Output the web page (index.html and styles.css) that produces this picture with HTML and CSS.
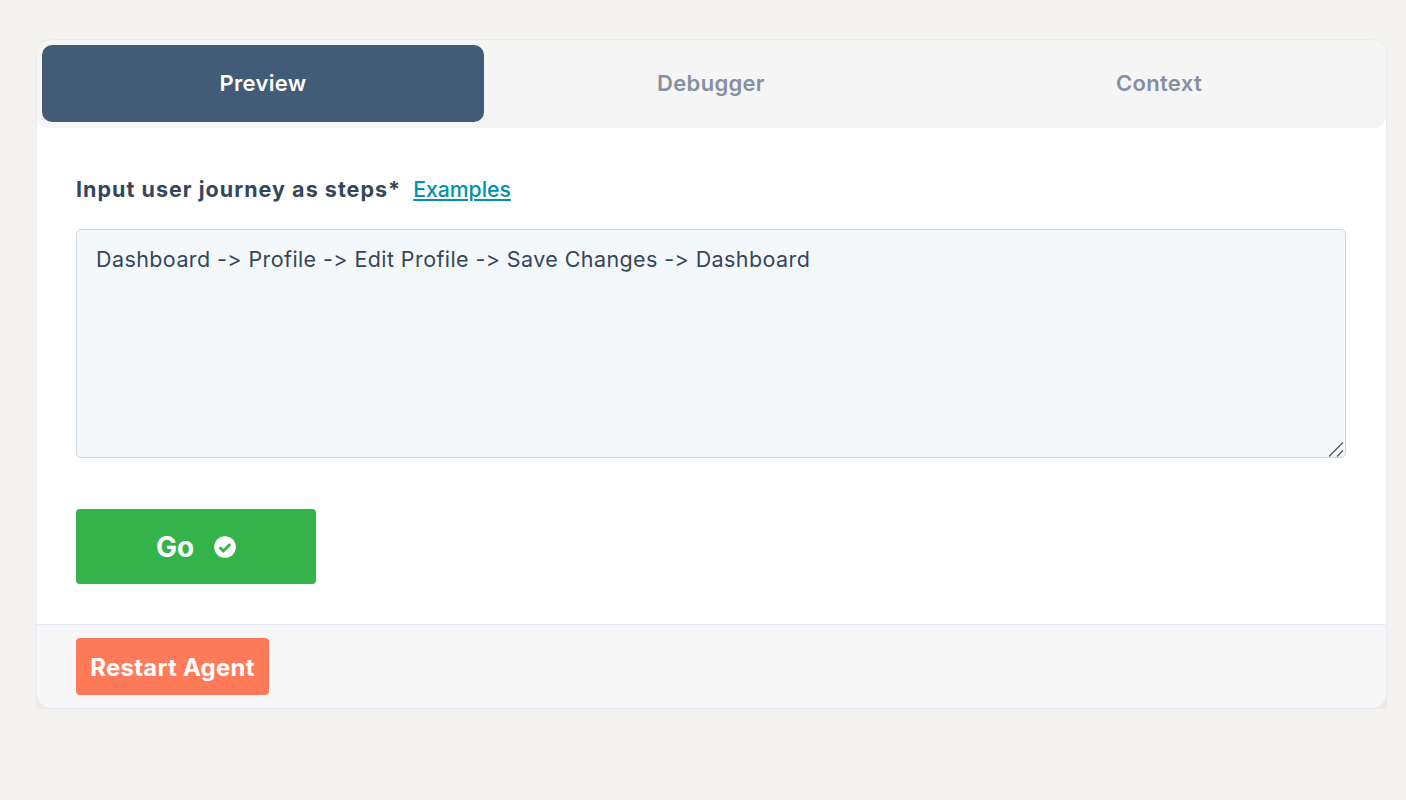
FILE: index.html
```html
<!DOCTYPE html>
<html lang="en">
<head>
<meta charset="utf-8">
<title>Agent preview</title>
<link rel="stylesheet" href="styles.css">
</head>
<body>
<div class="frame">
  <main class="card">
    <nav class="tabs">
      <button class="tab tab-active">Preview</button>
      <button class="tab">Debugger</button>
      <button class="tab">Context</button>
    </nav>
    <section class="content">
      <div class="label-row">
        <label class="label" for="steps">Input user journey as steps*</label>
        <a class="link" href="#">Examples</a>
      </div>
      <div class="input-wrap">
        <textarea class="input" id="steps">Dashboard -&gt; Profile -&gt; Edit Profile -&gt; Save Changes -&gt; Dashboard</textarea>
        <svg class="grip" viewBox="0 0 15 15" width="15" height="15" aria-hidden="true">
          <path d="M0 14.5L14 .5M8 14.5l6-6" fill="none" stroke="#555b61" stroke-width="1.3"/>
        </svg>
      </div>
      <button class="go"><span class="go-text">Go</span>
        <svg class="go-icon" viewBox="0 0 22 22" width="22" height="22" aria-hidden="true">
          <circle cx="11" cy="11" r="10.8" fill="#fff"/>
          <path d="M5.6 11.2l3.7 3.7 7-7" fill="none" stroke="#34b34a" stroke-width="2.8"/>
        </svg>
      </button>
    </section>
    <footer class="footer">
      <button class="restart">Restart Agent</button>
    </footer>
  </main>
</div>
</body>
</html>
```
FILE: styles.css
```css
* { box-sizing: border-box; }
html, body { margin: 0; height: 100%; }
body {
  background: #f3f2ee;
  padding: 39px 20px 0 36px;
  font-family: "Inter", "Liberation Sans", sans-serif;
  font-variant-ligatures: none;
  font-feature-settings: "calt" 0, "liga" 0;
  color: #33475b;
}
.frame {
  width: 1351px;
  background: linear-gradient(to top, #ecebe9 24px, transparent 24px);
}
.card {
  display: flex;
  flex-direction: column;
  height: 670px;
  background: #fff;
  border: 1px solid #e8e8f6;
  border-radius: 16px;
  overflow: hidden;
}
.tabs {
  display: grid;
  grid-template-columns: repeat(3, 1fr);
  gap: 6px;
  flex: none;
  height: 88px;
  padding: 5px 6px 6px 5px;
  background: #f5f5f5;
  border-radius: 0 0 12px 12px;
}
.tab {
  padding: 0 0 2px;
  border: 0;
  border-radius: 10px;
  background: transparent;
  font: 600 22px "Inter", "Liberation Sans", sans-serif;
  letter-spacing: .3px;
  color: #8590a0;
}
.tab-active { background: #425b76; color: #fff; }
.content { flex: 1; padding: 47px 39px 0; }
.label-row { display: flex; align-items: center; gap: 12px; height: 28px; }
.label { font-size: 21.5px; font-weight: 700; letter-spacing: 1.03px; }
.link { font-size: 21.2px; font-weight: 500; color: #0091ae; text-decoration: underline; }
.input-wrap { position: relative; width: 1270px; height: 229px; margin-top: 26px; }
.input {
  display: block;
  width: 100%;
  height: 100%;
  padding: 15px 19px;
  background: #f5f8fa;
  border: 1px solid #cbd6e2;
  border-radius: 5px;
  font: 400 21.5px/28px "Inter", "Liberation Sans", sans-serif;
  font-variant-ligatures: none;
  font-feature-settings: "calt" 0, "liga" 0;
  letter-spacing: .41px;
  color: #33475b;
  outline: 0;
  resize: none;
}
.grip { position: absolute; right: 2px; bottom: 1px; }
.go {
  display: flex;
  align-items: center;
  justify-content: center;
  gap: 20px;
  width: 240px;
  height: 75px;
  margin-top: 51px;
  border: 0;
  border-radius: 4px;
  background: #34b34a;
  color: #fff;
  font: 700 28px "Inter", "Liberation Sans", sans-serif;
}
.go-icon { flex: none; }
.footer {
  flex: none;
  height: 84px;
  padding: 13px 39px 0;
  background: #f7f7f8;
  border-top: 1px solid #e8e8f6;
}
.restart {
  height: 57px;
  width: 193px;
  padding: 2px 0 0;
  border: 0;
  border-radius: 4px;
  background: #ff7a59;
  color: #fff;
  font: 700 24px "Inter", "Liberation Sans", sans-serif;
  letter-spacing: .25px;
}
```
